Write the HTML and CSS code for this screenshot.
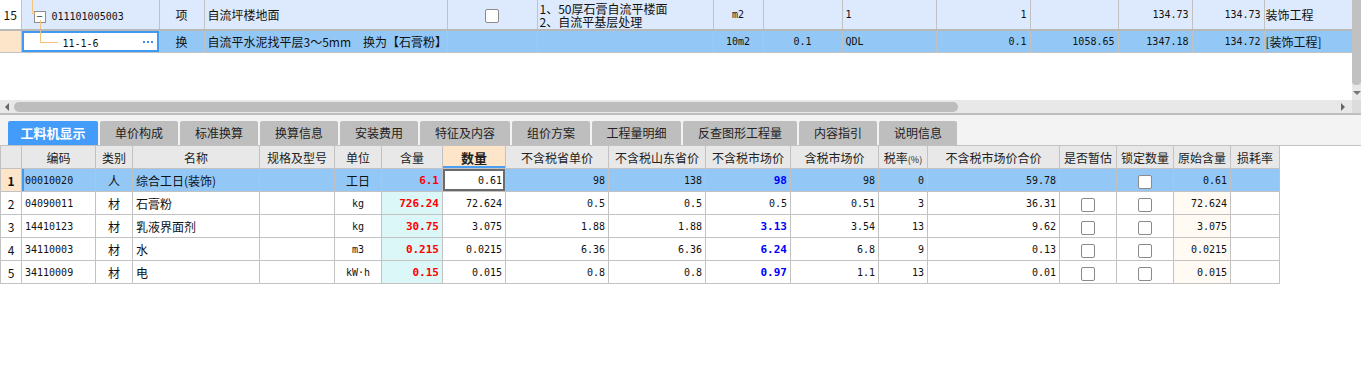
FILE: index.html
```html
<!DOCTYPE html>
<html lang="zh-CN">
<head>
  <meta charset="UTF-8">
  <meta name="viewport" content="width=device-width, initial-scale=1.0">
  <title>工料机显示</title>
  <link rel="stylesheet" href="styles.css">
</head>
<body>
  <!-- Upper grid: bill items -->
  <div class="top-pane">
    <div class="top-grid-wrap">
      <table class="grid top-grid">
        <colgroup>
          <col style="width:21px"><col style="width:138px"><col style="width:45px"><col style="width:243px">
          <col style="width:90px"><col style="width:176px"><col style="width:50px"><col style="width:79px">
          <col style="width:94px"><col style="width:94px"><col style="width:88px"><col style="width:74px">
          <col style="width:72px"><col style="width:88px">
        </colgroup>
        <tr class="item-row">
          <td class="rownum">15</td>
          <td class="tree-cell">
            <span class="line v1"></span><span class="line h1"></span><span class="line v2"></span>
            <span class="fold">−</span><span class="code">011101005003</span>
          </td>
          <td class="mid">项</td>
          <td>自流坪楼地面</td>
          <td class="mid"><span class="check"></span></td>
          <td class="feature">
            <div class="feature-line">1、50厚石膏自流平楼面</div>
            <div class="feature-line">2、自流平基层处理</div>
          </td>
          <td class="mid m">m2</td>
          <td></td>
          <td class="m">1</td>
          <td class="n">1</td>
          <td></td>
          <td class="n">134.73</td>
          <td class="n">134.73</td>
          <td class="tight">装饰工程</td>
        </tr>
        <tr class="sub-row">
          <td class="rownum peach"></td>
          <td class="tree-cell editing">
            <span class="line v3"></span><span class="line h3"></span>
            <span class="code sub">11-1-6</span><span class="dots"></span>
          </td>
          <td class="mid">换</td>
          <td>自流平水泥找平层3～5mm　换为【石膏粉】</td>
          <td></td>
          <td></td>
          <td class="mid m">10m2</td>
          <td class="mid m">0.1</td>
          <td class="m">QDL</td>
          <td class="n">0.1</td>
          <td class="n">1058.65</td>
          <td class="n">1347.18</td>
          <td class="n">134.72</td>
          <td class="tight">[装饰工程]</td>
        </tr>
      </table>
    </div>
    <div class="vscroll">
      <div class="vthumb"></div>
      <div class="arrow-down"></div>
    </div>
  </div>

  <div class="hscroll">
    <div class="htrack">
      <div class="arrow-left"></div>
      <div class="hthumb"></div>
      <div class="arrow-right"></div>
    </div>
    <div class="corner"></div>
  </div>

  <!-- Tabs -->
  <div class="tabs">
    <div class="tab active" style="width:90px">工料机显示</div>
    <div class="tab" style="width:78px">单价构成</div>
    <div class="tab" style="width:78px">标准换算</div>
    <div class="tab" style="width:78px">换算信息</div>
    <div class="tab" style="width:78px">安装费用</div>
    <div class="tab" style="width:90px">特征及内容</div>
    <div class="tab" style="width:78px">组价方案</div>
    <div class="tab" style="width:89px">工程量明细</div>
    <div class="tab" style="width:114px">反查图形工程量</div>
    <div class="tab" style="width:78px">内容指引</div>
    <div class="tab" style="width:78px">说明信息</div>
  </div>

  <!-- Lower grid: labour, materials, machinery -->
  <div class="bottom-pane">
    <table class="grid bottom-grid">
      <colgroup>
        <col style="width:21px"><col style="width:74px"><col style="width:37px"><col style="width:127px">
        <col style="width:75px"><col style="width:47px"><col style="width:61px"><col style="width:63px">
        <col style="width:103px"><col style="width:97px"><col style="width:85px"><col style="width:88px">
        <col style="width:49px"><col style="width:132px"><col style="width:57px"><col style="width:57px">
        <col style="width:57px"><col style="width:49px">
      </colgroup>
      <tr class="head">
        <th></th><th>编码</th><th>类别</th><th>名称</th><th>规格及型号</th><th>单位</th><th>含量</th>
        <th class="sort">数量</th><th>不含税省单价</th><th>不含税山东省价</th><th>不含税市场价</th>
        <th>含税市场价</th><th>税率<small>(%)</small></th><th>不含税市场价合价</th><th>是否暂估</th>
        <th>锁定数量</th><th>原始含量</th><th>损耗率</th>
      </tr>
      <tr class="current">
        <td class="rownum peach bold">1</td><td class="m first">00010020</td><td class="mid">人</td>
        <td>综合工日(装饰)</td><td></td><td class="mid">工日</td><td class="n red">6.1</td>
        <td class="n picked">0.61</td><td class="n">98</td><td class="n">138</td><td class="n blue">98</td>
        <td class="n">98</td><td class="n">0</td><td class="n">59.78</td><td></td>
        <td class="mid"><span class="check"></span></td><td class="n">0.61</td><td></td>
      </tr>
      <tr>
        <td class="rownum">2</td><td class="m">04090011</td><td class="mid">材</td>
        <td>石膏粉</td><td></td><td class="mid m">kg</td><td class="n red cyan">726.24</td>
        <td class="n">72.624</td><td class="n">0.5</td><td class="n">0.5</td><td class="n">0.5</td>
        <td class="n">0.51</td><td class="n">3</td><td class="n">36.31</td>
        <td class="mid"><span class="check"></span></td><td class="mid"><span class="check"></span></td>
        <td class="n cream">72.624</td><td></td>
      </tr>
      <tr>
        <td class="rownum">3</td><td class="m">14410123</td><td class="mid">材</td>
        <td>乳液界面剂</td><td></td><td class="mid m">kg</td><td class="n red cyan">30.75</td>
        <td class="n">3.075</td><td class="n">1.88</td><td class="n">1.88</td><td class="n blue">3.13</td>
        <td class="n">3.54</td><td class="n">13</td><td class="n">9.62</td>
        <td class="mid"><span class="check"></span></td><td class="mid"><span class="check"></span></td>
        <td class="n cream">3.075</td><td></td>
      </tr>
      <tr>
        <td class="rownum">4</td><td class="m">34110003</td><td class="mid">材</td>
        <td>水</td><td></td><td class="mid m">m3</td><td class="n red cyan">0.215</td>
        <td class="n">0.0215</td><td class="n">6.36</td><td class="n">6.36</td><td class="n blue">6.24</td>
        <td class="n">6.8</td><td class="n">9</td><td class="n">0.13</td>
        <td class="mid"><span class="check"></span></td><td class="mid"><span class="check"></span></td>
        <td class="n cream">0.0215</td><td></td>
      </tr>
      <tr>
        <td class="rownum">5</td><td class="m">34110009</td><td class="mid">材</td>
        <td>电</td><td></td><td class="mid m">kW·h</td><td class="n red cyan">0.15</td>
        <td class="n">0.015</td><td class="n">0.8</td><td class="n">0.8</td><td class="n blue">0.97</td>
        <td class="n">1.1</td><td class="n">13</td><td class="n">0.01</td>
        <td class="mid"><span class="check"></span></td><td class="mid"><span class="check"></span></td>
        <td class="n cream">0.015</td><td></td>
      </tr>
    </table>
  </div>
</body>
</html>
```

FILE: styles.css
```css
/* General */
body {
  margin: 0;
  width: 1361px;
  height: 370px;
  overflow: hidden;
  background: #fff;
  color: #111;
  font-family: "Noto Sans CJK SC", "Noto Sans", sans-serif;
  font-size: 12px;
}

/* Grid tables */
.grid {
  border-collapse: collapse;
  table-layout: fixed;
}
.grid td, .grid th {
  border: 1px solid #c2c2c2;
  padding: 0 3px;
  white-space: nowrap;
  overflow: hidden;
  font-weight: normal;
}
.grid td.tight { padding: 0 1px; }
.mid { text-align: center; }
.m, .n {
  font-family: "DejaVu Sans Mono", "Liberation Mono", monospace;
  font-size: 10px;
}
.n { text-align: right; }
.grid .red { color: #f00; font-weight: bold; font-size: 11px; }
.grid .blue { color: #00f; font-weight: bold; font-size: 11px; }
.grid .bold { font-weight: bold; }

.check {
  display: inline-block;
  width: 12px;
  height: 12px;
  border: 1px solid #8a8a8a;
  border-radius: 2px;
  background: #fff;
  vertical-align: middle;
}

/* Upper pane */
.top-pane {
  display: flex;
  height: 100px;
}
.top-grid-wrap {
  width: 1352px;
}
.top-grid {
  width: 1352px;
}
.top-grid tr:first-child td { border-top: none; }
.top-grid td:first-child { border-left: none; }
.item-row td {
  height: 29px;
  background: #dde9fc;
  border-bottom: 2px solid #b8b8b8;
}
.item-row .rownum { background: #fff; }
.sub-row td {
  height: 21px;
  background: #93c8f6;
}
.rownum {
  text-align: center;
  padding: 0;
}
.grid .peach { background: #fde5c9; }
.grid td.feature {
  padding: 0 2px;
}
.feature-line {
  height: 13px;
  line-height: 13px;
}

.grid td.tree-cell {
  position: relative;
  padding-left: 12px;
}
.sub-row .tree-cell.editing {
  background: #fff;
  box-shadow: inset 0 0 0 2px #3e9af2;
}
.line {
  position: absolute;
  background: #f8c27c;
}
.line.v1 { left: 10px; top: 0; width: 1px; height: 13px; }
.line.h1 { left: 10px; top: 13px; width: 3px; height: 1px; }
.line.v2 { left: 18px; top: 20px; width: 1px; height: 12px; }
.line.v3 { left: 18px; top: 0; width: 1px; height: 11px; }
.line.h3 { left: 18px; top: 11px; width: 18px; height: 1px; }
.fold {
  display: inline-block;
  width: 10px;
  height: 10px;
  line-height: 9px;
  border: 1px solid #8d8d8d;
  background: #fff;
  color: #333;
  text-align: center;
  font-size: 11px;
  vertical-align: middle;
  margin-right: 6px;
}
.code {
  font-family: "DejaVu Sans Mono", "Liberation Mono", monospace;
  font-size: 10px;
  vertical-align: middle;
}
.code.sub {
  margin-left: 29px;
}
.dots {
  position: absolute;
  left: 121px;
  top: 10px;
  width: 2px;
  height: 2px;
  background: #3a8fe4;
  box-shadow: 4px 0 0 #3a8fe4, 8px 0 0 #3a8fe4;
}

.vscroll {
  width: 9px;
  background: #e8e8e8;
  position: relative;
}
.vthumb {
  height: 85px;
  background: #c1c1c1;
  border-radius: 0 0 4px 4px;
}
.arrow-down {
  position: absolute;
  left: 1px;
  top: 91px;
  border-left: 4px solid transparent;
  border-right: 4px solid transparent;
  border-top: 4px solid #777;
}

/* Horizontal scrollbar */
.hscroll {
  display: flex;
  height: 13px;
  border-bottom: 2px solid #bdbdbd;
}
.htrack {
  width: 1352px;
  background: #e8e8e8;
  position: relative;
}
.hthumb {
  position: absolute;
  left: 14px;
  top: 2px;
  width: 944px;
  height: 10px;
  border-radius: 5px;
  background: #bdbdbd;
}
.arrow-left, .arrow-right {
  position: absolute;
  top: 3px;
  border-top: 4px solid transparent;
  border-bottom: 4px solid transparent;
}
.arrow-left { left: 5px; border-right: 4px solid #666; }
.arrow-right { right: 7px; border-left: 4px solid #666; }
.corner {
  width: 9px;
  background: #dcdcdc;
}

/* Tabs */
.tabs {
  display: flex;
  align-items: flex-end;
  gap: 2px;
  height: 30px;
  padding-left: 8px;
  background: #f3f3f3;
  border-bottom: 1px solid #c2c2c2;
}
.tab {
  height: 24px;
  line-height: 24px;
  text-align: center;
  background: #bebebe;
  color: #222;
  border-radius: 2px 2px 0 0;
  font-size: 12px;
}
.tab.active {
  background: #439cf9;
  color: #fff;
  font-weight: bold;
  font-size: 13px;
}

/* Lower grid */
.bottom-grid {
  width: 1279px;
}
.bottom-grid tr:first-child th { border-top: none; }
.bottom-grid td { height: 22px; }
.head th {
  height: 22px;
  background: #e8e8e8;
  color: #222;
  text-align: center;
  padding: 0;
}
.head th small { font-size: 9px; }
.head th.sort {
  background: #fde5c9;
  font-weight: bold;
  font-size: 13px;
  box-shadow: inset 0 -2px 0 #4a9ff5;
}
.current td { background: #93c8f6; }
.current td.first { box-shadow: inset 2px 0 0 #3e9af2; }
.current td.picked {
  background: #fff;
  box-shadow: inset 0 0 0 2px #6b6b6b;
}
.bottom-grid td.cyan { background: #dbf7f7; }
.bottom-grid td.cream { background: #fffaf3; }
```
